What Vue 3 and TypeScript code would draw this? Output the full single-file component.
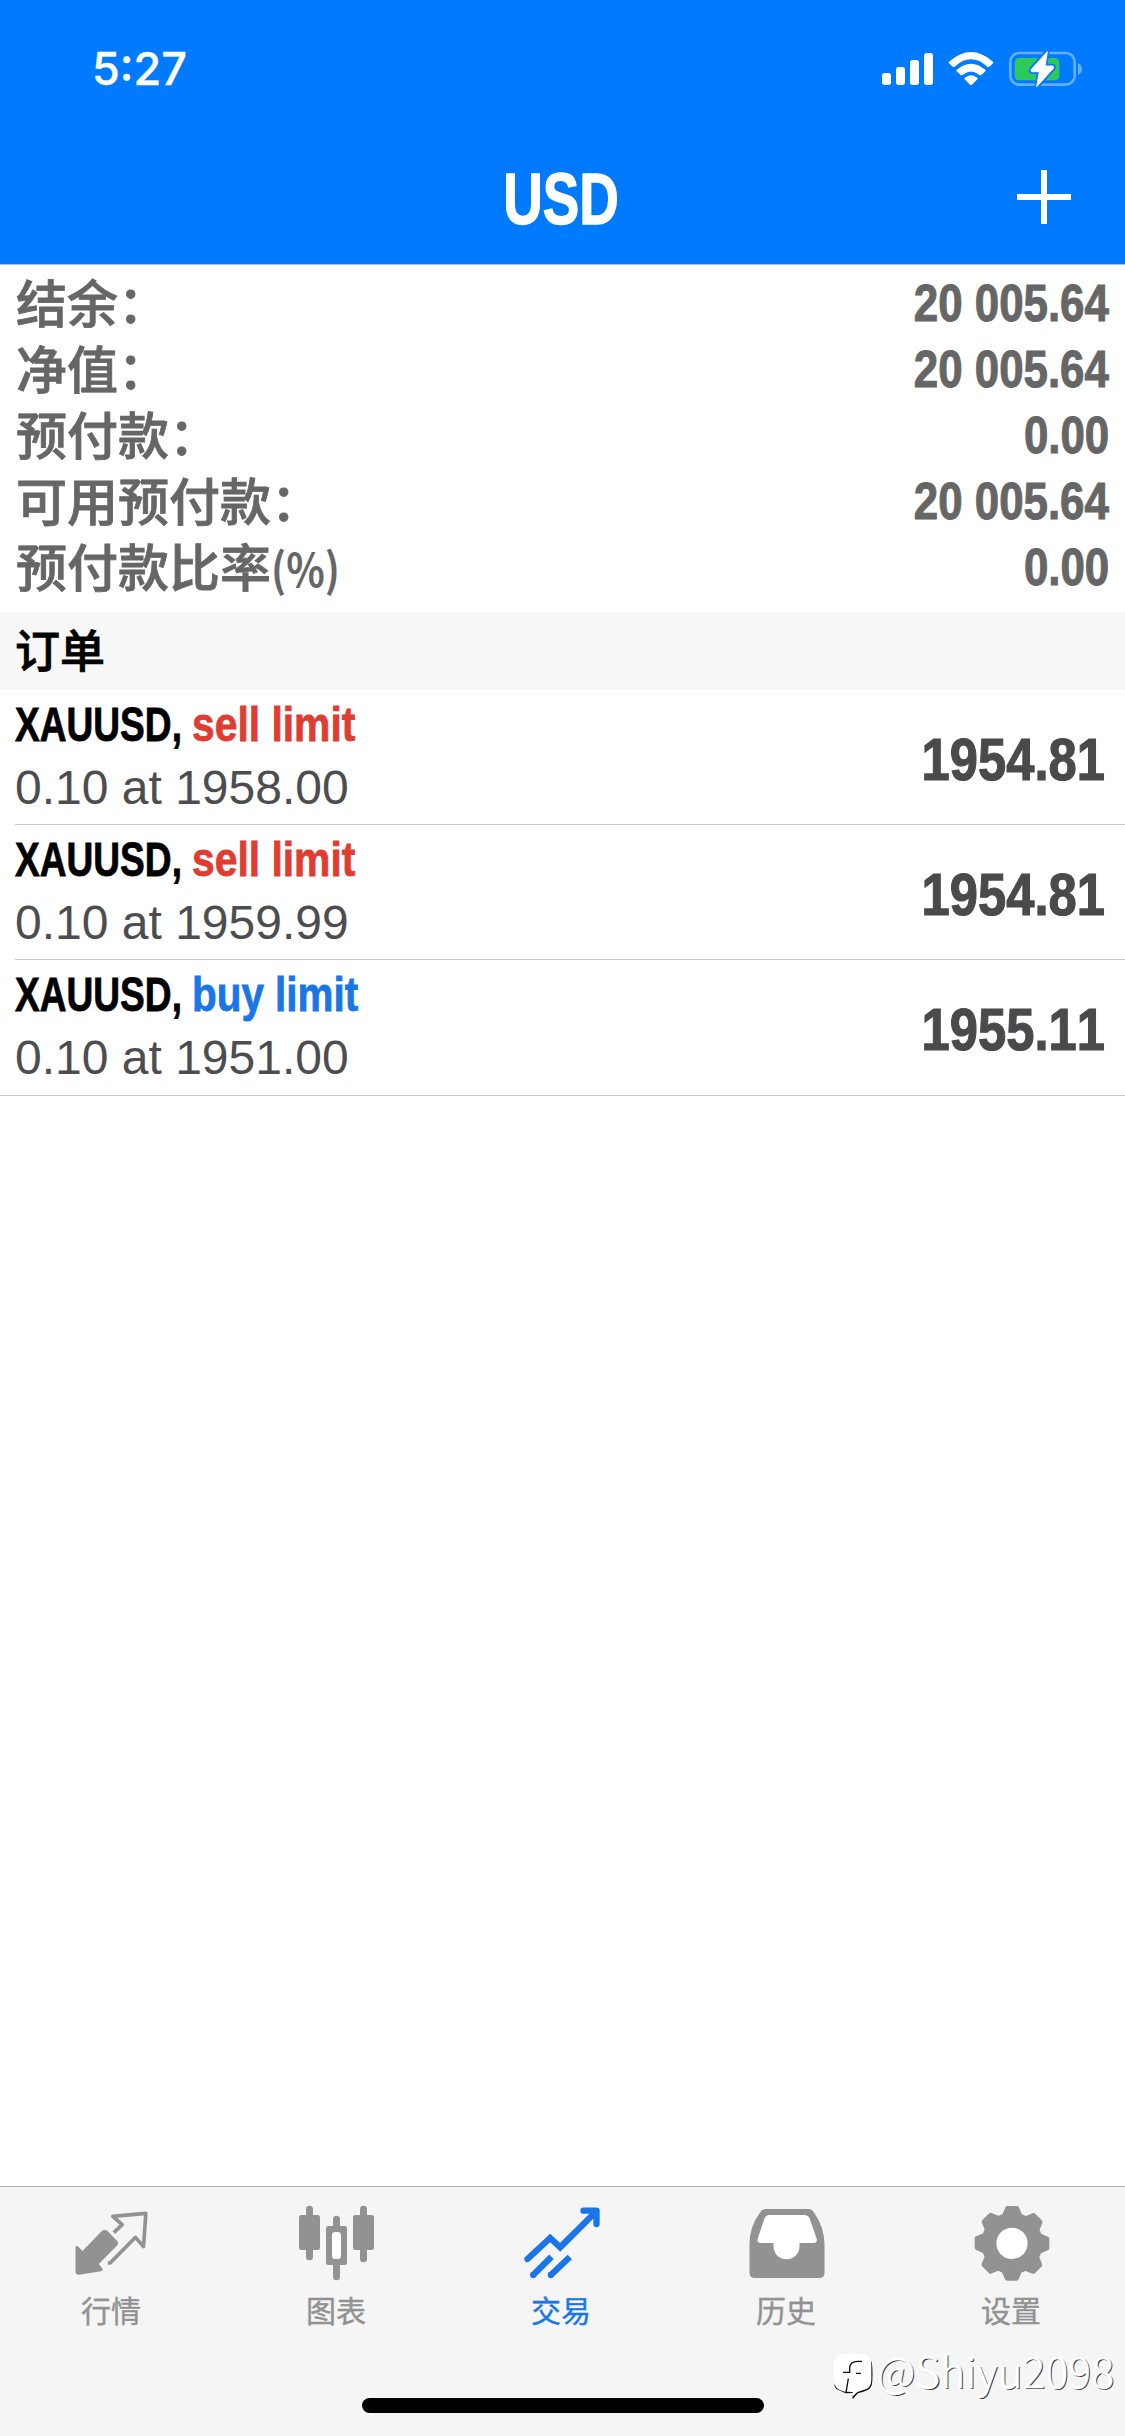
<script setup lang="ts">
interface Balance { label: string; unit?: string; value: string }
interface Order { symbol: string; side: 'sell' | 'buy'; volume: string; price: string; current: string }
interface Tab { id: string; label: string }

const balances: Balance[] = [
  { label: '结余：', value: '20 005.64' },
  { label: '净值：', value: '20 005.64' },
  { label: '预付款：', value: '0.00' },
  { label: '可用预付款：', value: '20 005.64' },
  { label: '预付款比率', unit: '(%)', value: '0.00' },
]

const orders: Order[] = [
  { symbol: 'XAUUSD,', side: 'sell', volume: '0.10', price: '1958.00', current: '1954.81' },
  { symbol: 'XAUUSD,', side: 'sell', volume: '0.10', price: '1959.99', current: '1954.81' },
  { symbol: 'XAUUSD,', side: 'buy', volume: '0.10', price: '1951.00', current: '1955.11' },
]

const tabs: Tab[] = [
  { id: 'quotes', label: '行情' },
  { id: 'charts', label: '图表' },
  { id: 'trade', label: '交易' },
  { id: 'history', label: '历史' },
  { id: 'settings', label: '设置' },
]
const activeTab = 'trade'
const teeth: number[] = [0, 45, 90, 135, 180, 225, 270, 315]
</script>

<template>
  <div class="screen">
    <header class="top">
      <div class="status">
        <span class="clock">5:27</span>
        <svg class="status-icons" viewBox="60 54 615 126" fill="#fff">
          <rect x="66" y="129" width="27" height="36" rx="8" />
          <rect x="108" y="111" width="27" height="54" rx="8" />
          <rect x="150" y="90" width="27" height="75" rx="8" />
          <rect x="192" y="69" width="27" height="96" rx="8" />
          <path d="M267 95 Q333 37 399 95 Q401 98 399 100 L388 110 Q385 112 382 110 Q333 66 284 110 Q281 112 278 110 L267 100 Q265 98 267 95Z" />
          <path d="M290 119 Q333 83 376 119 Q378 122 376 124 L364 135 Q361 137 358 135 Q333 114 308 135 Q305 137 302 135 L290 124 Q288 122 290 119Z" />
          <path d="M314 143 Q333 128 352 143 Q354 146 352 148 L336 164 Q333 166 330 164 L314 148 Q312 146 314 143Z" />
          <rect x="451" y="69" width="193" height="95" rx="27" fill="none" stroke="#66afff" stroke-width="8" />
          <path d="M654 100 Q666 106 666 117 Q666 129 654 135Z" fill="#66afff" />
          <rect x="464" y="84" width="134" height="67" rx="13" fill="#2fc95b" />
          <path d="M562 65 L514 118 Q511 125 517 125 L538 125 L530 170 L579 116 Q584 109 577 108 L555 108 Z" stroke="#077aff" stroke-width="14" stroke-linejoin="round" />
          <path d="M562 65 L514 118 Q511 125 517 125 L538 125 L530 170 L579 116 Q584 109 577 108 L555 108 Z" stroke="#fff" stroke-width="3" stroke-linejoin="round" />
        </svg>
      </div>
      <div class="nav">
        <h1 class="title">USD</h1>
        <svg class="plus" viewBox="0 0 54 54"><path d="M27 0V54M0 27H54" stroke="#fff" stroke-width="6" /></svg>
      </div>
    </header>

    <section class="summary">
      <div v-for="b in balances" :key="b.label" class="balance">
        <span class="balance-label">{{ b.label }}<span v-if="b.unit" class="unit">{{ b.unit }}</span></span>
        <span class="balance-value">{{ b.value }}</span>
      </div>
    </section>

    <h2 class="section">订单</h2>

    <ul class="orders">
      <li v-for="o in orders" :key="o.price" class="order">
        <div>
          <div class="order-head">
            <span class="symbol">{{ o.symbol }}</span>
            <span class="side" :class="o.side">{{ o.side }} limit</span>
          </div>
          <div class="order-sub">{{ o.volume }} at {{ o.price }}</div>
        </div>
        <span class="current">{{ o.current }}</span>
      </li>
    </ul>

    <footer class="bottom">
      <nav class="tabs">
        <div v-for="t in tabs" :key="t.id" class="tab" :class="{ active: t.id === activeTab }">
          <svg v-if="t.id === 'quotes'" class="icon" viewBox="82.5 90 270 270">
            <path d="M184 183Q193 177 202 184L230 213Q236 220 229 227L175 282L187 298Q188 303 181 304L116 314Q105 315 105 304V231Q108 225 114 231L126 243Z" fill="currentColor" />
            <path d="M220 188L245 164L217 139L316 130L309 230L285 202L209 279H202" fill="none" stroke="currentColor" stroke-width="11" stroke-linejoin="round" />
          </svg>
          <svg v-else-if="t.id === 'charts'" class="icon" viewBox="759 90 270 270">
            <path d="M808.500 118V260M970.500 118V266M889.500 148V180M889.500 275V320" stroke="currentColor" stroke-width="21" stroke-linecap="round" />
            <rect x="777" y="135" width="63" height="105" rx="7" fill="currentColor" />
            <rect x="939" y="135" width="63" height="105" rx="7" fill="currentColor" />
            <rect x="858" y="168" width="63" height="117" rx="7" fill="currentColor" />
            <rect x="876" y="186" width="27" height="81" rx="10" fill="#fff" />
          </svg>
          <svg v-else-if="t.id === 'trade'" class="icon" viewBox="112.5 90 270 270" fill="none" stroke="currentColor" stroke-width="19">
            <path d="M141 267L209 204L239 232L340 131" stroke-linecap="round" stroke-linejoin="miter" />
            <path d="M309 122H348V162" stroke-linecap="round" stroke-linejoin="round" />
            <path d="M322 124H347V150Z" fill="currentColor" stroke="none" />
            <path d="M213 260L158 315M268 261L211 315" />
            <path d="M158 315h.1M211 315h.1" stroke-linecap="round" />
          </svg>
          <svg v-else-if="t.id === 'history'" class="icon" viewBox="787.500 90 270 270">
            <path d="M857 117H983Q994 117 1000 127Q1031 171 1032 222V308Q1032 324 1016 324H823Q807 324 807 308V222Q807 171 839 127Q846 117 857 117Z" fill="currentColor" />
            <path d="M867 135H971Q982 135 987 144L1009 208Q1010 219 1000 219H957V227C957 281 879 281 879 227V219H841Q829 219 831 208L852 145Q857 135 867 135Z" fill="#fff" />
          </svg>
          <svg v-else class="icon" viewBox="82.5 90 270 270">
            <g fill="currentColor" stroke="currentColor" stroke-width="14" stroke-linejoin="round">
              <path v-for="a in teeth" :key="a" d="M201 115H229L243 148H187Z" :transform="`rotate(${a} 214.5 220)`" />
            </g>
            <circle cx="214.500" cy="220" r="92" fill="currentColor" />
            <circle cx="214.500" cy="220" r="47" fill="#fff" />
          </svg>
          <span class="tab-label">{{ t.label }}</span>
        </div>
      </nav>
      <div class="home"></div>
      <div class="watermark">
        <svg class="mark" viewBox="90 150 141 150">
          <path d="M214 184Q219 198 217 242Q217 270 190 275L174 280L158 297L157 291L160 279L137 280L108 266Q102 258 103 250Z" fill="#111" />
          <path d="M135 161H182Q214 161 214 195V239Q214 266 188 271L172 276L157 290L159 277L145 275H134Q101 268 101 241V195Q101 161 135 161Z" fill="#fff" />
          <path d="M186 184H173Q150 184 149 204V217H129M168 220H183M145 236L138 278" fill="none" stroke="#111" stroke-width="4" />
        </svg>
        <span class="handle">@Shiyu2098</span>
      </div>
    </footer>
  </div>
</template>

<style>
body { margin: 0; background: #fff; }
</style>

<style scoped>
.screen {
  width: 1125px;
  height: 2436px;
  display: flex;
  flex-direction: column;
  overflow: hidden;
  background: #fff;
  font-family: "Liberation Sans", "Noto Sans CJK SC", sans-serif;
}
.top {
  height: 264px;
  background: #007aff;
  border-bottom: 1px solid #9ccaf8;
  color: #fff;
}
.status {
  display: flex;
  justify-content: space-between;
  align-items: center;
  height: 138px;
  padding: 0 40px 0 92px;
}
.clock {
  font: 500 45px/60px Inter, sans-serif;
  -webkit-text-stroke: 0.4px currentColor;
}
.status-icons { width: 205px; height: 42px; }
.nav {
  display: grid;
  grid-template-columns: 1fr auto 1fr;
  align-items: center;
  height: 118px;
  padding: 0 54px;
}
.title {
  grid-column: 2;
  margin: 3px 2px 0 0;
  font-size: 73px;
  line-height: 84px;
  transform: scaleX(0.75);
  -webkit-text-stroke: 1.4px currentColor;
}
.plus { justify-self: end; width: 54px; height: 54px; }
.summary {
  flex: none;
  height: 347px;
  box-sizing: border-box;
  padding-top: 6px;
  color: #666;
  font-size: 51px;
}
.balance {
  display: flex;
  justify-content: space-between;
  height: 66px;
  line-height: 66px;
  padding: 0 16px;
}
.balance-label {
  font-family: "Noto Sans CJK SC", sans-serif;
  font-weight: 500;
  line-height: 60px;
  -webkit-text-stroke: 0.8px currentColor;
}
.unit {
  display: inline-block;
  font-size: 46px;
  font-weight: 700;
  transform: scaleX(0.87);
  transform-origin: left;
  -webkit-text-stroke: 0;
}
.balance-value {
  font-weight: 700;
  transform: scaleX(0.86);
  transform-origin: right;
  -webkit-text-stroke: 1px currentColor;
}
.section {
  margin: 0;
  height: 78px;
  padding: 0 15px;
  background: #f7f7f7;
  color: #000;
  font: 500 45px/73px "Noto Sans CJK SC", sans-serif;
  -webkit-text-stroke: 0.8px currentColor;
}
.orders { margin: 0; padding: 0; list-style: none; border-bottom: 1px solid #c8c7cc; }
.order {
  display: flex;
  justify-content: space-between;
  height: 131px;
  margin-left: 15px;
  padding: 3px 20px 0 0;
  border-bottom: 1px solid #c8c7cc;
}
.order:last-child { padding-bottom: 1px; border-bottom: 0; }
.order-head {
  display: flex;
  height: 63px;
  font-size: 49px;
  font-weight: 700;
  line-height: 62px;
  -webkit-text-stroke: 0.8px currentColor;
}
.symbol { width: 177px; color: #000; transform: scaleX(0.757); transform-origin: left; white-space: nowrap; }
.side { transform-origin: left; white-space: nowrap; }
.sell { color: #df3d32; transform: scaleX(0.833); }
.buy { color: #1a76e8; transform: scaleX(0.825); }
.order-sub { color: #4d4d50; font-size: 48px; line-height: 63px; }
.current {
  color: #4a4a4d;
  font-size: 60px;
  font-weight: 700;
  line-height: 133px;
  font-kerning: none;
  transform: scaleX(0.845);
  transform-origin: right;
  -webkit-text-stroke: 1.2px currentColor;
}
.bottom {
  position: relative;
  height: 249px;
  margin-top: auto;
  border-top: 1px solid #adadad;
  background: #f5f5f5;
}
.tabs { display: flex; height: 211px; }
.tab {
  display: flex;
  flex: 1;
  flex-direction: column;
  align-items: center;
  padding-top: 13px;
  color: #929292;
}
.active { color: #1a76e8; }
.icon { width: 90px; height: 90px; }
.tab-label {
  margin-right: 3px;
  font: 400 30px/39px "Noto Sans CJK SC", sans-serif;
  -webkit-text-stroke: 0.4px currentColor;
}
.home { width: 402px; height: 15px; margin: 0 auto; border-radius: 8px; background: #000; }
.watermark {
  position: absolute;
  left: 830px;
  top: 163px;
  display: flex;
  white-space: nowrap;
}
.mark { width: 47px; height: 50px; }
.handle {
  color: #fff;
  font: 300 42px/39px "Noto Sans CJK SC", sans-serif;
  letter-spacing: 0.4px;
  text-shadow: 1.3px 1.3px 0 #333;
  -webkit-text-stroke: 0.6px #fff;
}
</style>
